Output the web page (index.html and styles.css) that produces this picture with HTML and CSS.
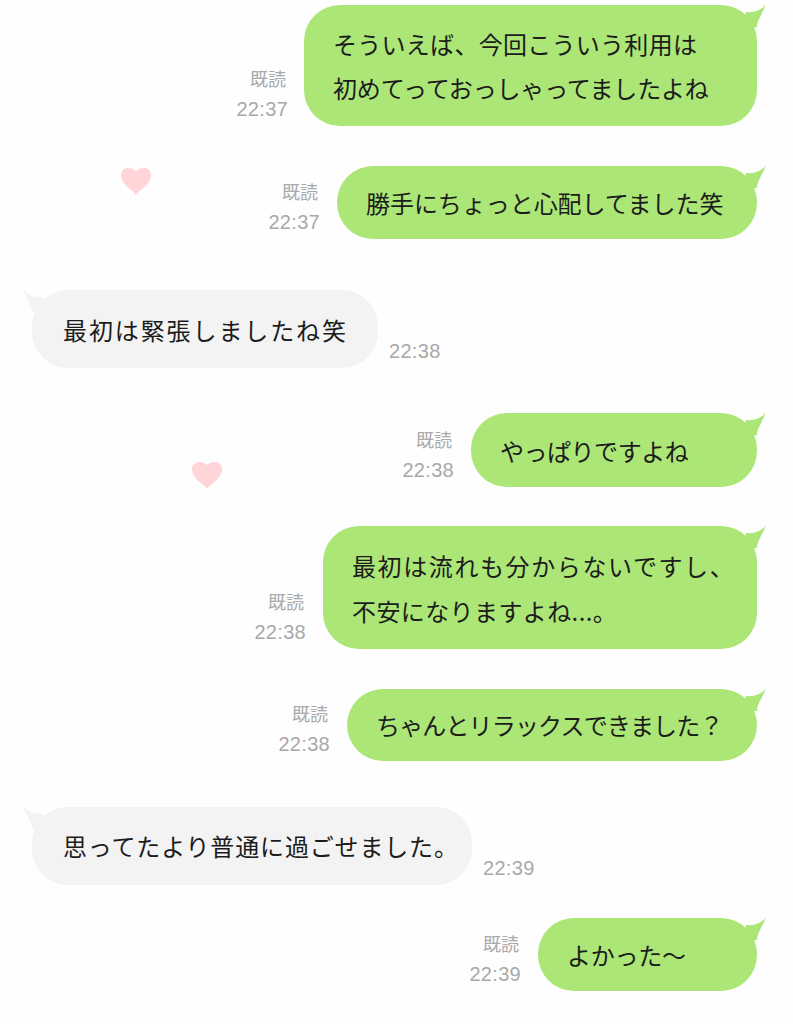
FILE: index.html

```html
<!DOCTYPE html>
<html lang="ja">
<head>
    <title>トーク</title>
    <meta charset="UTF-8">
    <link rel="stylesheet" href="styles.css">
</head>
<body>
    <div class="chat">
        <div class="row me row-1">
            <div class="meta"><span class="read">既読</span><span class="time">22:37</span></div>
            <div class="bubble two-lines">
                <svg class="tail" viewBox="0 0 24 24"><path d="M23 1C20 6 12 10 3 9L0 20V24H14C14 17 19 12 23 1Z"/></svg>
                <span class="line line-a">そういえば、今回こういう利用は</span>
                <span class="line line-b">初めてっておっしゃってましたよね</span>
            </div>
        </div>
        <div class="row me row-2">
            <div class="meta"><span class="read">既読</span><span class="time">22:37</span></div>
            <div class="bubble">
                <svg class="tail" viewBox="0 0 24 24"><path d="M23 1C20 6 12 10 3 9L0 20V24H14C14 17 19 12 23 1Z"/></svg>
                勝手にちょっと心配してました笑
            </div>
        </div>
        <div class="row them row-3">
            <div class="bubble">
                <svg class="tail" viewBox="0 0 24 24"><path d="M1 1C4 6 12 10 21 9L24 20V24H10C10 17 5 12 1 1Z"/></svg>
                最初は緊張しましたね笑
            </div>
            <div class="meta"><span class="time">22:38</span></div>
        </div>
        <div class="row me row-4">
            <div class="meta"><span class="read">既読</span><span class="time">22:38</span></div>
            <div class="bubble">
                <svg class="tail" viewBox="0 0 24 24"><path d="M23 1C20 6 12 10 3 9L0 20V24H14C14 17 19 12 23 1Z"/></svg>
                やっぱりですよね
            </div>
        </div>
        <div class="row me row-5">
            <div class="meta"><span class="read">既読</span><span class="time">22:38</span></div>
            <div class="bubble two-lines">
                <svg class="tail" viewBox="0 0 24 24"><path d="M23 1C20 6 12 10 3 9L0 20V24H14C14 17 19 12 23 1Z"/></svg>
                <span class="line line-a">最初は流れも分からないですし、</span>
                <span class="line line-b">不安になりますよね...。</span>
            </div>
        </div>
        <div class="row me row-6">
            <div class="meta"><span class="read">既読</span><span class="time">22:38</span></div>
            <div class="bubble">
                <svg class="tail" viewBox="0 0 24 24"><path d="M23 1C20 6 12 10 3 9L0 20V24H14C14 17 19 12 23 1Z"/></svg>
                ちゃんとリラックスできました？
            </div>
        </div>
        <div class="row them row-7">
            <div class="bubble">
                <svg class="tail" viewBox="0 0 24 24"><path d="M1 1C4 6 12 10 21 9L24 20V24H10C10 17 5 12 1 1Z"/></svg>
                思ってたより普通に過ごせました。
            </div>
            <div class="meta"><span class="time">22:39</span></div>
        </div>
        <div class="row me row-8">
            <div class="meta"><span class="read">既読</span><span class="time">22:39</span></div>
            <div class="bubble">
                <svg class="tail" viewBox="0 0 24 24"><path d="M23 1C20 6 12 10 3 9L0 20V24H14C14 17 19 12 23 1Z"/></svg>
                よかった〜
            </div>
        </div>

        <svg class="heart heart-1" viewBox="0 0 32 28"><path d="M16 28C12 22 1 18 1 8C1 3 5 1 8 1C12 1 14 2 16 4C18 2 20 1 24 1C27 1 31 3 31 8C31 18 20 22 16 28Z"/></svg>
        <svg class="heart heart-2" viewBox="0 0 32 28"><path d="M16 28C12 22 1 18 1 8C1 3 5 1 8 1C12 1 14 2 16 4C18 2 20 1 24 1C27 1 31 3 31 8C31 18 20 22 16 28Z"/></svg>
    </div>
</body>
</html>
```

FILE: styles.css

```css
body {
    margin: 0;
    background: #fefefe;
    font-family: "Noto Sans CJK JP", "Noto Sans", sans-serif;
    color: #1c1c1c;
}
.chat {
    position: relative;
    height: 1024px;
    box-sizing: border-box;
    padding: 5px 36px 0 32px;
    overflow: hidden;
}
.row {
    display: flex;
    align-items: flex-end;
    margin-top: 40px;
}
.me {
    justify-content: flex-end;
}
.bubble {
    position: relative;
    box-sizing: border-box;
    padding: 15px 0 14px 29px;
    border-radius: 36px;
    background: #abe676;
    font-size: 24px;
    line-height: 44px;
    white-space: nowrap;
}
.two-lines {
    padding-top: 17px;
    padding-bottom: 16px;
}
.line {
    display: block;
}
.them .bubble {
    padding: 17px 0 17px 31px;
    background: #f3f3f3;
}
.tail {
    position: absolute;
    top: -2px;
    right: -10px;
    width: 24px;
    height: 24px;
    fill: #abe676;
}
.them .tail {
    left: -10px;
    right: auto;
    fill: #f3f3f3;
}
.meta {
    display: flex;
    flex-direction: column;
    align-items: flex-end;
    margin: 0 17px 4px 0;
    color: #a9a9a9;
}
.them .meta {
    margin: 0 0 4px 11px;
}
.read {
    font-size: 18px;
    line-height: 35px;
    margin-right: 2px;
}
.time {
    font-family: "Liberation Sans", Arial, sans-serif;
    font-size: 20px;
    line-height: 26px;
    letter-spacing: 0.3px;
}
.heart {
    position: absolute;
    width: 32px;
    height: 28px;
    fill: #ffd5d8;
}
.heart-1 {
    left: 120px;
    top: 167px;
}
.heart-2 {
    left: 191px;
    top: 461px;
}
.row-1 {
    margin-top: 0;
}
.row-1 .bubble {
    width: 453px;
}
.row-1 .meta {
    margin-right: 16px;
}
.row-1 .line-a {
    letter-spacing: 0.28px;
}
.row-1 .line-b {
    letter-spacing: -0.16px;
}
.row-2 .bubble {
    width: 420px;
    letter-spacing: -0.05px;
}
.row-3 {
    margin-top: 51px;
}
.row-3 .bubble {
    width: 346px;
    padding-top: 18px;
    padding-bottom: 16px;
    letter-spacing: 1.9px;
}
.row-4 {
    margin-top: 45px;
}
.row-4 .bubble {
    width: 286px;
    padding-top: 16px;
    letter-spacing: -0.47px;
}
.row-5 {
    margin-top: 39px;
}
.row-5 .bubble {
    width: 434px;
    line-height: 45px;
}
.row-5 .line-a {
    letter-spacing: 1.6px;
}
.row-5 .line-b {
    letter-spacing: 0.4px;
}
.row-6 .bubble {
    width: 410px;
    padding-top: 14px;
    letter-spacing: -0.85px;
}
.row-7 {
    margin-top: 46px;
}
.row-7 .bubble {
    width: 440px;
    letter-spacing: 0.84px;
}
.row-8 {
    margin-top: 33px;
}
.row-8 .bubble {
    width: 219px;
    letter-spacing: -0.25px;
}
```
